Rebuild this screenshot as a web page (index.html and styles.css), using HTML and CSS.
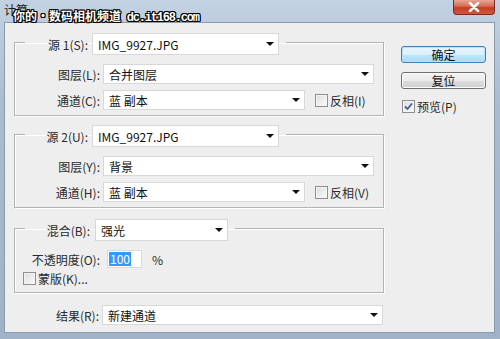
FILE: index.html
```html
<!DOCTYPE html>
<html lang="zh-CN">
<head>
  <meta charset="UTF-8" />
  <title>计算</title>
  <link rel="stylesheet" href="styles.css">
</head>
<body>
  <div class="window">
    <div class="titlebar">
      <span class="title">计算</span>
      <span class="close">
        <svg width="14" height="10" viewBox="0 0 14 10"><path d="M3 1 L11 9 M11 1 L3 9" stroke="#fff" stroke-width="2.6" stroke-linecap="round"/></svg>
      </span>
      <div class="watermark">你的•数码相机频道 <span class="url">dc.it168.com</span></div>
    </div>

    <div class="client">
      <div class="main">
        <fieldset class="group">
          <legend>
            <span class="label src-label">源 1(S):</span>
            <div class="select src">IMG_9927.JPG<i class="arrow"></i></div>
          </legend>
          <div class="row first">
            <span class="label">图层(L):</span>
            <div class="select wide">合并图层<i class="arrow"></i></div>
          </div>
          <div class="row">
            <span class="label">通道(C):</span>
            <div class="select mid">蓝 副本<i class="arrow"></i></div>
            <label class="check"><span class="box"></span>反相(I)</label>
          </div>
        </fieldset>

        <fieldset class="group second">
          <legend>
            <span class="label src-label">源 2(U):</span>
            <div class="select src">IMG_9927.JPG<i class="arrow"></i></div>
          </legend>
          <div class="row first">
            <span class="label">图层(Y):</span>
            <div class="select wide">背景<i class="arrow"></i></div>
          </div>
          <div class="row">
            <span class="label">通道(H):</span>
            <div class="select mid">蓝 副本<i class="arrow"></i></div>
            <label class="check"><span class="box"></span>反相(V)</label>
          </div>
        </fieldset>

        <fieldset class="group third">
          <legend>
            <span class="label blend-label">混合(B):</span>
            <div class="select blend">强光<i class="arrow"></i></div>
          </legend>
          <div class="row first short">
            <span class="label">不透明度(O):</span>
            <div class="num"><span class="sel">100</span></div>
            <span class="pct">%</span>
          </div>
          <div class="row mask">
            <label class="check"><span class="box"></span>蒙版(K)...</label>
          </div>
        </fieldset>

        <div class="row result">
          <span class="label">结果(R):</span>
          <div class="select full">新建通道<i class="arrow"></i></div>
        </div>
      </div>

      <div class="side">
        <button class="btn default">确定</button>
        <button class="btn">复位</button>
        <label class="check preview">
          <span class="box">
            <svg width="9" height="9" viewBox="0 0 9 9"><path d="M1 4.5 L3.5 7 L8 1.5" fill="none" stroke="#3b5fa0" stroke-width="1.8"/></svg>
          </span>预览(P)
        </label>
      </div>
    </div>
  </div>
</body>
</html>
```

FILE: styles.css
```css
body {
  margin: 0;
  font-family: "Noto Sans CJK SC", "Liberation Sans", sans-serif;
  font-size: 12px;
  color: #2a2a2a;
  background: #ffffff;
}
.window {
  width: 500px;
  height: 339px;
  box-sizing: border-box;
  background: linear-gradient(#c3d2e2, #aabcd0 30%, #9fb2c7);
  overflow: hidden;
}
.titlebar {
  position: relative;
  height: 22px;
  display: flex;
  align-items: flex-start;
}
.title {
  margin: 2px 0 0 4px;
  font-size: 12px;
  line-height: 15px;
  color: #1c1c1c;
}
.close {
  margin-left: auto;
  margin-right: 5px;
  width: 42px;
  height: 15px;
  box-sizing: border-box;
  border: 1px solid #7b2a1d;
  border-top: none;
  border-radius: 0 0 4px 4px;
  background: linear-gradient(#e9a592, #d46c55 45%, #c23c24 55%, #d2583e);
  display: flex;
  align-items: center;
  justify-content: center;
}
.watermark {
  position: absolute;
  left: 13px;
  top: 8px;
  font-size: 12px;
  font-weight: bold;
  line-height: 16px;
  color: #fff;
  white-space: nowrap;
  text-shadow: 1px 0 #000, -1px 0 #000, 0 1px #000, 0 -1px #000,
    1px 1px #000, -1px -1px #000, 1px -1px #000, -1px 1px #000;
}
.watermark .url {
  font-family: "Liberation Mono", monospace;
  letter-spacing: -1.2px;
  margin-left: 3px;
}
.client {
  margin: 0 5px 0 4px;
  height: 311px;
  box-sizing: border-box;
  border: 1px solid #8c9bab;
  background: #eeeeee;
  display: flex;
}
.main {
  padding: 6px 0 0 9px;
  width: 379px;
  box-sizing: border-box;
}
.group {
  margin: 0;
  padding: 0 0 5px 0;
  width: 370px;
  box-sizing: border-box;
  border: 1px solid #b3b3b3;
  box-shadow: inset 1px 1px 0 #ffffff, 1px 1px 0 #ffffff;
  min-inline-size: 0;
}
.group.second {
  margin-top: 5px;
}
.group.third {
  margin-top: 7px;
  padding-bottom: 7px;
}
legend {
  margin-left: 10px;
  padding: 4px 7px 0 0;
  display: flex;
  align-items: center;
}
.label {
  display: inline-block;
  width: 85px;
  margin-right: 3px;
  text-align: right;
  white-space: nowrap;
}
.src-label {
  width: 63px;
  margin-right: 4px;
}
.blend-label {
  width: 65px;
  margin-right: 5px;
}
.row {
  display: flex;
  align-items: center;
  height: 20px;
  margin-top: 6px;
}
.row.first {
  margin-top: 9px;
}
.row.short {
  height: 18px;
}
.row.mask {
  height: 14px;
  margin-top: 3px;
}
.row.result {
  margin-top: 12px;
}
.select {
  height: 20px;
  box-sizing: border-box;
  padding: 0 4px 0 5px;
  background: #ffffff;
  border: 1px solid #d8d8d8;
  display: flex;
  align-items: center;
  justify-content: space-between;
  color: #111;
  white-space: nowrap;
}
.select.src {
  width: 187px;
  height: 22px;
}
.select.blend {
  width: 133px;
  height: 22px;
}
.select.wide {
  width: 271px;
}
.select.mid {
  width: 202px;
}
.select.full {
  width: 281px;
}
.arrow {
  width: 0;
  height: 0;
  border-left: 4px solid transparent;
  border-right: 4px solid transparent;
  border-top: 4px solid #111;
}
.check {
  display: flex;
  align-items: center;
  margin-left: 10px;
  white-space: nowrap;
}
.box {
  width: 13px;
  height: 13px;
  box-sizing: border-box;
  margin-right: 2px;
  border: 1px solid #8f8f8f;
  background: linear-gradient(135deg, #dcdcdc, #fbfbfb);
  box-shadow: inset 0 0 0 1px #f4f4f4;
  display: flex;
  align-items: center;
  justify-content: center;
}
.mask .check {
  margin-left: 8px;
}
.num {
  width: 35px;
  height: 18px;
  margin-left: 4px;
  box-sizing: border-box;
  padding: 1px 0 1px 1px;
  background: #ffffff;
  border: 1px solid #dadada;
  display: flex;
}
.sel {
  background: #3399ff;
  color: #fff;
  font-size: 12px;
  line-height: 14px;
  padding: 0 1px;
}
.pct {
  margin-left: 10px;
}
.side {
  margin-left: 17px;
  padding-top: 23px;
  display: flex;
  flex-direction: column;
  align-items: flex-start;
}
.btn {
  width: 85px;
  height: 17px;
  padding: 0;
  font-family: "Noto Sans CJK SC", sans-serif;
  font-size: 12px;
  line-height: 14px;
  color: #111;
  border: 1px solid #707070;
  border-radius: 3px;
  background: linear-gradient(#f3f3f3, #ebebeb 50%, #dddddd 51%, #cfcfcf);
  box-shadow: inset 0 0 0 1px #fcfcfc;
}
.btn + .btn {
  margin-top: 9px;
}
.btn.default {
  border-color: #3c7fb1;
  background: linear-gradient(#e8f5fc, #d9f0fc 50%, #bee6fd 51%, #a7d9f5);
  box-shadow: inset 0 0 0 1px #b5e3f8;
}
.check.preview {
  margin: 9px 0 0 1px;
}
```
